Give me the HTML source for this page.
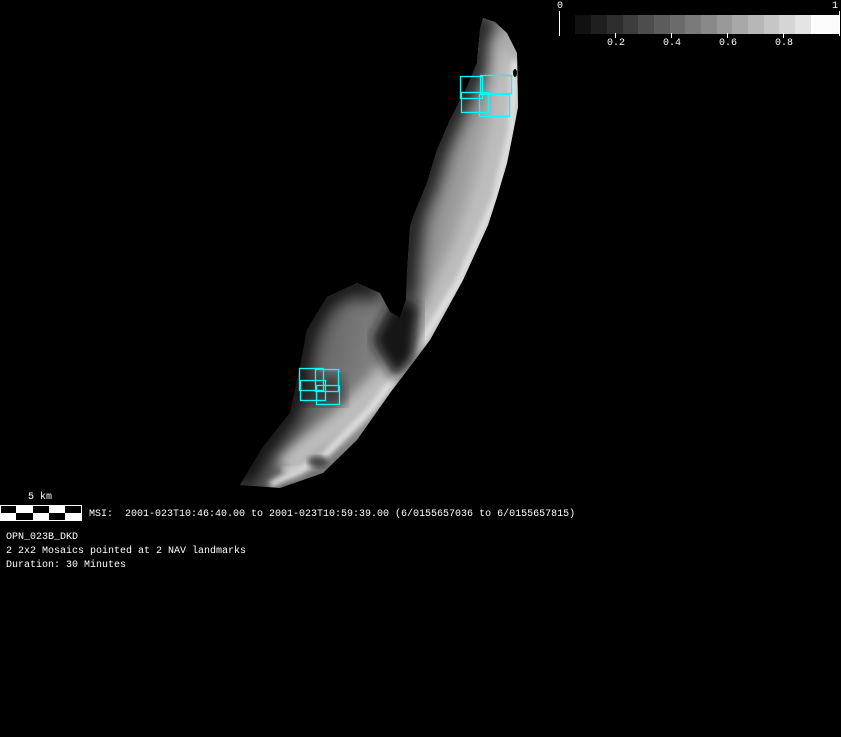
<!DOCTYPE html>
<html><head><meta charset="utf-8"><style>
html,body{margin:0;padding:0;background:#000;}
body{width:841px;height:737px;position:relative;overflow:hidden;font-family:"Liberation Mono","DejaVu Sans Mono",monospace;color:#fff;}
.t{position:absolute;font-size:10px;line-height:13px;white-space:pre;}
</style></head><body>
<svg width="841" height="737" style="position:absolute;left:0;top:0">
<defs>
<linearGradient id="g" x1="0" y1="0" x2="1" y2="0.35">
<stop offset="0" stop-color="#181818"/>
<stop offset="0.35" stop-color="#505050"/>
<stop offset="0.7" stop-color="#8a8a8a"/>
<stop offset="1" stop-color="#c8c8c8"/>
</linearGradient>
<filter id="b"><feGaussianBlur stdDeviation="6"/></filter>
<filter id="b2"><feGaussianBlur stdDeviation="3"/></filter>
<filter id="b3"><feGaussianBlur stdDeviation="9"/></filter>
<clipPath id="c"><path d="M483,18 L495,22 L507,33 L517,53 L518,107 L513,133 L507,163 L497,197 L488,225 L463,280 L430,340 L390,393 L357,440 L323,473 L280,488 L240,485 L263,447 L290,413 L300,367 L307,330 L327,297 L357,283 L380,293 L390,312 L400,318 L406,300 L407,273 L410,227 L413,217 L427,183 L437,150 L450,120 L467,87 L477,63 L480,30 Z"/></clipPath>
</defs>
<g clip-path="url(#c)">
<rect x="230" y="10" width="300" height="490" fill="url(#g)"/>
<path d="M485,40 L505,70 L505,120 L490,180 L465,250 L435,310 L395,370 L345,420 L300,455 L285,470" stroke="#bdbdbd" stroke-width="26" fill="none" filter="url(#b)"/>
<path d="M515,60 L512,130 L495,200 L460,280 L420,345 L370,410 L320,460 L270,485" stroke="#e4e4e4" stroke-width="7" fill="none" filter="url(#b2)"/>
<path d="M395,295 L420,305 L415,360 L395,380 L372,340 Z" fill="#181818" filter="url(#b)"/>
<path d="M300,380 L340,375 L345,405 L300,405 Z" fill="#3a3a3a" filter="url(#b)"/>
<ellipse cx="318" cy="462" rx="10" ry="6" fill="#444" filter="url(#b2)"/>
<ellipse cx="292" cy="470" rx="10" ry="3" fill="#ccc" filter="url(#b2)"/>
<path d="M490,14 L480,30 L477,63 L467,87 L450,120 L437,150 L427,183 L413,217 L407,273 L407,300 M240,485 L263,447 L290,413 L300,367 L307,330 L327,297 L357,283 L380,293" stroke="#000" stroke-width="18" fill="none" filter="url(#b3)"/>
</g>
<ellipse cx="515" cy="73" rx="2" ry="4" fill="#000"/>
<g fill="none" stroke="#0ff" stroke-width="1.3">
<rect x="460.5" y="76.5" width="22" height="22"/>
<rect x="480.5" y="75.5" width="31" height="18"/>
<rect x="461.5" y="92.5" width="27" height="20"/>
<rect x="479.5" y="94.5" width="30" height="22"/>
<rect x="299.5" y="368.5" width="24" height="22"/>
<rect x="315.5" y="369.5" width="23" height="22"/>
<rect x="300.5" y="380.5" width="25" height="20"/>
<rect x="316.5" y="385.5" width="23" height="19"/>
</g>
<g>
<rect x="575" y="15" width="16" height="19" fill="#111"/>
<rect x="591" y="15" width="16" height="19" fill="#1f1f1f"/>
<rect x="607" y="15" width="16" height="19" fill="#2e2e2e"/>
<rect x="623" y="15" width="15" height="19" fill="#3d3d3d"/>
<rect x="638" y="15" width="16" height="19" fill="#4d4d4d"/>
<rect x="654" y="15" width="16" height="19" fill="#5c5c5c"/>
<rect x="670" y="15" width="15" height="19" fill="#6b6b6b"/>
<rect x="685" y="15" width="16" height="19" fill="#7a7a7a"/>
<rect x="701" y="15" width="16" height="19" fill="#898989"/>
<rect x="717" y="15" width="15" height="19" fill="#999"/>
<rect x="732" y="15" width="16" height="19" fill="#a8a8a8"/>
<rect x="748" y="15" width="16" height="19" fill="#b7b7b7"/>
<rect x="764" y="15" width="15" height="19" fill="#c6c6c6"/>
<rect x="779" y="15" width="16" height="19" fill="#d5d5d5"/>
<rect x="795" y="15" width="16" height="19" fill="#e4e4e4"/>
<rect x="811" y="15" width="29" height="19" fill="#fcfcfc"/>
</g>
<g stroke="#fff" stroke-width="1">
<line x1="559.5" y1="11" x2="559.5" y2="36"/>
<line x1="839.5" y1="11" x2="839.5" y2="36"/>
<line x1="615.5" y1="33" x2="615.5" y2="38"/>
<line x1="671.5" y1="33" x2="671.5" y2="38"/>
<line x1="727.5" y1="33" x2="727.5" y2="38"/>
<line x1="783.5" y1="33" x2="783.5" y2="38"/>
</g>
<rect x="0" y="505" width="82" height="16" fill="#fff"/>
<g fill="#000">
<rect x="1" y="506" width="15" height="7"/><rect x="33" y="506" width="16" height="7"/><rect x="65" y="506" width="16" height="7"/>
<rect x="16" y="513" width="17" height="7"/><rect x="49" y="513" width="16" height="7"/>
</g>
</svg>
<div class="t" style="left:557px;top:0px">0</div>
<div class="t" style="left:832px;top:0px">1</div>
<div class="t" style="left:607px;top:37px">0.2</div>
<div class="t" style="left:663px;top:37px">0.4</div>
<div class="t" style="left:719px;top:37px">0.6</div>
<div class="t" style="left:775px;top:37px">0.8</div>
<div class="t" style="left:28px;top:491px">5 km</div>
<div class="t" style="left:89px;top:508px">MSI:  2001-023T10:46:40.00 to 2001-023T10:59:39.00 (6/0155657036 to 6/0155657815)</div>
<div class="t" style="left:6px;top:531px">OPN_023B_DKD</div>
<div class="t" style="left:6px;top:545px">2 2x2 Mosaics pointed at 2 NAV landmarks</div>
<div class="t" style="left:6px;top:559px">Duration: 30 Minutes</div>
</body></html>
